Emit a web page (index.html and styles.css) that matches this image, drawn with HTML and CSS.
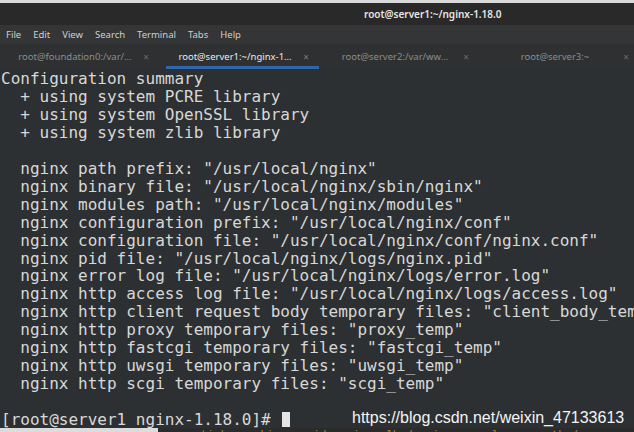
FILE: index.html
```html
<!DOCTYPE html>
<html>
<head>
<meta charset="utf-8">
<link rel="stylesheet" href="styles.css">
</head>
<body>
<div class="window">
  <div class="topline"></div>
  <div class="titlebar"><span class="title">root@server1:~/nginx-1.18.0</span></div>
  <div class="menubar">
    <span>File</span><span>Edit</span><span>View</span><span>Search</span><span>Terminal</span><span>Tabs</span><span>Help</span>
  </div>
  <div class="tabbar">
    <div class="tab"><span class="label">root@foundation0:/var/…</span><span class="close">×</span></div>
    <div class="tab active"><span class="label">root@server1:~/nginx-1…</span><span class="close">×</span></div>
    <div class="tab"><span class="label">root@server2:/var/ww…</span><span class="close">×</span></div>
    <div class="tab"><span class="label">root@server3:~</span><span class="close">×</span></div>
  </div>
  <div class="terminal">
<pre class="out">Configuration summary
  + using system PCRE library
  + using system OpenSSL library
  + using system zlib library

  nginx path prefix: "/usr/local/nginx"
  nginx binary file: "/usr/local/nginx/sbin/nginx"
  nginx modules path: "/usr/local/nginx/modules"
  nginx configuration prefix: "/usr/local/nginx/conf"
  nginx configuration file: "/usr/local/nginx/conf/nginx.conf"
  nginx pid file: "/usr/local/nginx/logs/nginx.pid"
  nginx error log file: "/usr/local/nginx/logs/error.log"
  nginx http access log file: "/usr/local/nginx/logs/access.log"
  nginx http client request body temporary files: "client_body_temp"
  nginx http proxy temporary files: "proxy_temp"
  nginx http fastcgi temporary files: "fastcgi_temp"
  nginx http uwsgi temporary files: "uwsgi_temp"
  nginx http scgi temporary files: "scgi_temp"

[root@server1 nginx-1.18.0]# <span class="cursor"></span></pre>
    <div class="watermark">https://blog.csdn.net/weixin_47133613</div>
  </div>
  <div class="bottom">
    <div class="bottom-light"></div>
    <div class="bottom-dark"><span class="other">sticky cookie srv_id expires=1h domain=.example.com path=/;</span></div>
  </div>
</div>
</body>
</html>
```
FILE: styles.css
```css
html, body {
  margin: 0;
  padding: 0;
  background: #2d3032;
  overflow: hidden;
}
.window {
  width: 634px;
  height: 432px;
  display: flex;
  flex-direction: column;
  overflow: hidden;
}
.topline {
  height: 3px;
  background: #d9d9d9;
  flex: none;
}
.titlebar {
  height: 22px;
  flex: none;
  background: #292929;
  display: flex;
  align-items: center;
  padding-left: 364px;
  font-family: "Noto Sans", sans-serif;
  font-size: 10px;
  font-weight: 600;
  color: #e6e6e6;
  box-sizing: border-box;
}
.menubar {
  height: 19px;
  flex: none;
  background: #333536;
  display: flex;
  align-items: center;
  gap: 12px;
  padding-left: 6px;
  font-family: "Noto Sans", sans-serif;
  font-size: 9.5px;
  color: #cfcfcf;
}
.tabbar {
  height: 25px;
  flex: none;
  background: #2e3031;
  display: flex;
  overflow: hidden;
  font-family: "Noto Sans", sans-serif;
  font-size: 9.5px;
}
.tab {
  flex: none;
  width: 160px;
  box-sizing: border-box;
  display: flex;
  align-items: center;
  padding: 0 10px 0 12px;
  color: #8c8e8f;
}
.tab .label {
  flex: 1;
  text-align: center;
  white-space: nowrap;
  overflow: hidden;
}
.tab .close {
  width: 8px;
  text-align: center;
  font-size: 10px;
  color: #6d6f70;
  margin-left: 4px;
}
.tab.active {
  color: #ececec;
  background: linear-gradient(#2f66ad, #2f66ad) 6px 100% / 153px 3px no-repeat;
}
.tab.active .close {
  color: #7a7c7d;
}
.terminal {
  flex: 1;
  background: #2d3032;
  position: relative;
  overflow: hidden;
}
.out {
  margin: 0;
  padding: 1px 0 0 1px;
  font-family: "DejaVu Sans Mono", monospace;
  font-size: 16px;
  line-height: 17.95px;
  color: #d8d8d6;
  white-space: pre;
}
.cursor {
  display: inline-block;
  width: 8px;
  height: 15px;
  background: #e4e4e4;
  vertical-align: -2px;
  margin-left: 2px;
}
.watermark {
  position: absolute;
  left: 352px;
  top: 340px;
  font-family: "Liberation Sans", Arial, sans-serif;
  font-size: 16px;
  line-height: 18px;
  color: #f4f4f4;
  white-space: nowrap;
}
.bottom {
  height: 4px;
  flex: none;
  display: flex;
  overflow: hidden;
}
.bottom-light {
  width: 158px;
  background: #dcdcdc;
}
.bottom-dark {
  flex: 1;
  background: #2b2b2b;
  overflow: hidden;
  padding-left: 36px;
}
.other {
  display: block;
  font-family: "DejaVu Sans Mono", monospace;
  font-size: 11px;
  line-height: 11px;
  margin-top: 1px;
  color: #9a8a48;
  white-space: nowrap;
}
```
